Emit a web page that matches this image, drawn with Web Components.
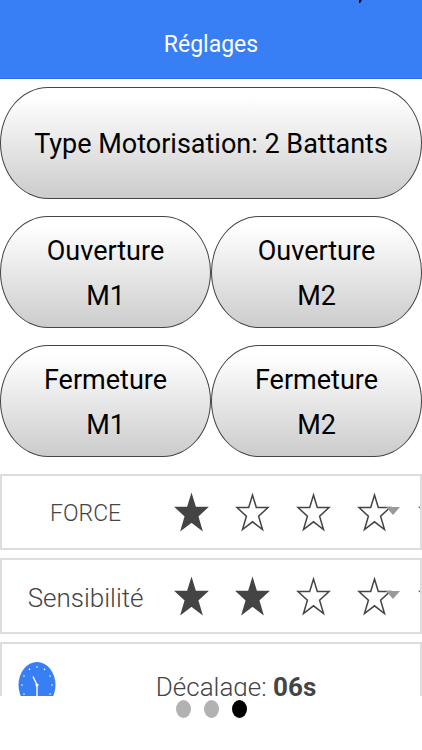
<!DOCTYPE html>
<html lang="fr">
<head>
<meta charset="utf-8">
<meta name="viewport" content="width=device-width, initial-scale=1">
<title>Réglages</title>
<style>
  body {
    margin: 0;
    background: #fff;
    font-family: Roboto, "Liberation Sans", sans-serif;
  }
</style>
</head>
<body>

<settings-page>
  <title-bar slot="header">Réglages</title-bar>

  <pill-button>Type Motorisation: 2 Battants</pill-button>
  <button-row>
    <pill-button>Ouverture<br>M1</pill-button>
    <pill-button>Ouverture<br>M2</pill-button>
  </button-row>
  <button-row>
    <pill-button>Fermeture<br>M1</pill-button>
    <pill-button>Fermeture<br>M2</pill-button>
  </button-row>

  <card-list>
    <star-setting value="1" small>FORCE</star-setting>
    <star-setting value="2">Sensibilité</star-setting>
    <delay-setting value="06s">Décalage:</delay-setting>
  </card-list>

  <page-dots slot="footer" count="3" current="3"></page-dots>
</settings-page>

<script>
'use strict';

class SettingsPage extends HTMLElement {

  connectedCallback() {
    this.attachShadow({mode: 'open'});
    this.shadowRoot.innerHTML = `
      <style>
        :host {
          display: flex;
          flex-direction: column;
          height: 100vh;
        }

        main {
          flex: 1;
          min-height: 0;
          overflow: hidden;
          display: flex;
          flex-direction: column;
          gap: 17px;
          padding-top: 8px;
        }
      </style>
      <slot name="header"></slot>
      <main><slot></slot></main>
      <slot name="footer"></slot>
    `;
  }
}

class TitleBar extends HTMLElement {

  connectedCallback() {
    this.attachShadow({mode: 'open'});
    this.shadowRoot.innerHTML = `
      <style>
        :host {
          display: block;
          position: relative;
          box-sizing: border-box;
          padding: 29px 16px 17px;
          background: #387ef5;
          border-bottom: 1px solid #2f6ee0;
        }

        h1 {
          margin: 0;
          color: #fff;
          font-size: 23px;
          line-height: 32px;
          font-weight: 400;
          text-align: center;
        }

        /* tail of the status bar, over the blue */
        svg {
          position: absolute;
          top: 0;
          left: 85%;
        }
      </style>
      <svg width="4" height="3" viewBox="0 0 4 3" aria-hidden="true"><path d="M0 0h3L1 3H0z"/></svg>
      <h1><slot></slot></h1>
    `;
  }
}

class ButtonRow extends HTMLElement {

  connectedCallback() {
    this.attachShadow({mode: 'open'});
    this.shadowRoot.innerHTML = `
      <style>
        :host {
          display: grid;
          grid-template-columns: 1fr 1fr;
        }
      </style>
      <slot></slot>
    `;
  }
}

class PillButton extends HTMLElement {

  connectedCallback() {
    this.attachShadow({mode: 'open'});
    this.shadowRoot.innerHTML = `
      <style>
        :host {
          display: block;
        }

        button {
          display: block;
          box-sizing: border-box;
          width: 100%;
          min-height: 112px;
          padding: 11px 0 8px;
          border: 1px solid #444;
          border-radius: 48px / 56px;
          background: linear-gradient(#fff 8%, #ccc);
          color: #000;
          font-family: inherit;
          font-size: 27px;
          line-height: 45px;
        }
      </style>
      <button type="button"><slot></slot></button>
    `;
  }
}

class CardList extends HTMLElement {

  connectedCallback() {
    this.attachShadow({mode: 'open'});
    this.shadowRoot.innerHTML = `
      <style>
        :host {
          display: flex;
          flex-direction: column;
          gap: 8px;
          color: #444;
          font-weight: 300;
        }
      </style>
      <slot></slot>
    `;
  }
}

class StarSetting extends HTMLElement {

  connectedCallback() {
    let value = Number(this.getAttribute('value')) || 1;
    let max = 5;
    let star = `
      <svg width="35" height="40" viewBox="0 0 35 40" aria-hidden="true">
        <path d="M17.5 3L21.3 15.5H33L23.6 24.2L27.5 37.5L17.5 29.8L7.5 37.5L11.4 24.2L2 15.5H13.7Z"/>
      </svg>`;
    let options = '';

    for (let i = 1; i <= max; i++) {
      options += `<option value="${i}" label="${i}"></option>`;
    }

    this.attachShadow({mode: 'open'});
    this.shadowRoot.innerHTML = `
      <style>
        :host {
          display: grid;
          grid-template-columns: 2fr 3fr;
          align-items: center;
          box-sizing: border-box;
          height: 76px;
          border: 2px solid #ddd;
          overflow: hidden;
        }

        label {
          padding-top: 4px;
          font-size: 26px;
          line-height: 36px;
          text-align: center;
        }

        :host([small]) label {
          font-size: 23px;
        }

        .stars {
          position: relative;
          display: flex;
          gap: 26px;
          min-width: 0;
          padding-left: 5px;
        }

        .stars svg {
          flex: none;
          fill: none;
          stroke: #444;
          stroke-width: 1.5;
        }

        .stars svg.on {
          fill: #444;
        }

        select {
          position: absolute;
          inset: 0;
          width: 100%;
          opacity: 0;
        }

        .arrow {
          position: absolute;
          top: 15px;
          right: 20px;
          border: 7px solid transparent;
          border-top: 8px solid #999;
          border-bottom: 0;
        }
      </style>
      <label for="level"><slot></slot></label>
      <div class="stars">
        ${star.repeat(max)}
        <span class="arrow"></span>
        <select id="level">${options}</select>
      </div>
    `;

    let select = this.shadowRoot.querySelector('select');
    let stars = this.shadowRoot.querySelectorAll('.stars svg');

    function paint() {
      stars.forEach(function(item, i) {
        item.classList.toggle('on', i < Number(select.value));
      });
    }

    select.value = value;
    select.onchange = paint;
    paint();
  }
}

class DelaySetting extends HTMLElement {

  connectedCallback() {
    let ticks = '';

    for (let i = 0; i < 12; i++) {
      let angle = i * Math.PI / 6;
      let x = 19 + 15 * Math.sin(angle);
      let y = 23 - 18 * Math.cos(angle);
      ticks += `<circle cx="${x.toFixed(1)}" cy="${y.toFixed(1)}" r=".8"/>`;
    }

    this.attachShadow({mode: 'open'});
    this.shadowRoot.innerHTML = `
      <style>
        :host {
          display: flex;
          align-items: center;
          box-sizing: border-box;
          flex: none;
          height: 86px;
          padding: 0 4px 0 16px;
          border: 2px solid #ddd;
        }

        svg {
          flex: none;
        }

        p {
          flex: 1;
          margin: 0;
          padding-top: 4px;
          font-size: 26px;
          line-height: 36px;
          text-align: center;
        }

        b {
          font-weight: 700;
        }
      </style>
      <svg width="38" height="46" viewBox="0 0 38 46" aria-hidden="true">
        <ellipse cx="19" cy="23" rx="18.5" ry="23" fill="#387ef5"/>
        <g fill="#fff">${ticks}<circle cx="19" cy="23" r="1.6"/></g>
        <path d="M15 14.5L19 23V38" fill="none" stroke="#fff" stroke-width="1.4"/>
      </svg>
      <p><slot></slot> <b>${this.getAttribute('value')}</b></p>
    `;
  }
}

class PageDots extends HTMLElement {

  connectedCallback() {
    let count = Number(this.getAttribute('count'));
    let current = Number(this.getAttribute('current'));
    let dots = '';

    for (let i = 1; i <= count; i++) {
      dots += `<button type="button" aria-label="Page ${i}"${i === current ? ' aria-current="page"' : ''}></button>`;
    }

    this.attachShadow({mode: 'open'});
    this.shadowRoot.innerHTML = `
      <style>
        :host {
          display: flex;
          justify-content: center;
          gap: 13px;
          padding: 4px 0 32px;
        }

        button {
          width: 15px;
          height: 18px;
          padding: 0;
          border: 0;
          border-radius: 50%;
          background: #b2b2b2;
        }

        button[aria-current] {
          background: #000;
        }
      </style>
      ${dots}
    `;
  }
}

customElements.define('settings-page', SettingsPage);
customElements.define('title-bar', TitleBar);
customElements.define('button-row', ButtonRow);
customElements.define('pill-button', PillButton);
customElements.define('card-list', CardList);
customElements.define('star-setting', StarSetting);
customElements.define('delay-setting', DelaySetting);
customElements.define('page-dots', PageDots);
</script>
</body>
</html>
